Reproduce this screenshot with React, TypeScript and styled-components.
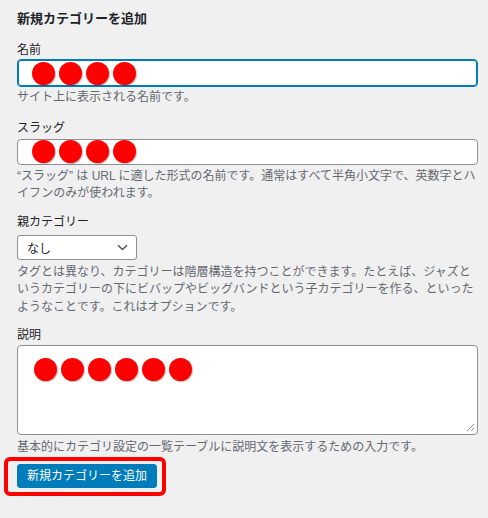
import React from 'react'
import styled, { createGlobalStyle } from 'styled-components'

const GlobalStyle = createGlobalStyle`
  body {
    margin: 0;
    background: #f0f0f1;
    font-family: "Liberation Sans", "Noto Sans CJK JP", sans-serif;
    color: #1d2327;
  }
`

const Panel = styled.div`
  padding: 10px 10px 30px 17px;
`

const Title = styled.h2`
  margin: 0;
  font-size: 13px;
  font-weight: 700;
  line-height: 18px;
`

const Field = styled.div<{ $top: number }>`
  margin-top: ${p => p.$top}px;
`

const Label = styled.label`
  display: block;
  font-size: 12px;
  line-height: 18px;
`

const TextBox = styled.div<{ $focused?: boolean; $height: number; $padTop: number; $padLeft: number; $top: number }>`
  position: relative;
  box-sizing: border-box;
  margin-top: ${p => p.$top}px;
  height: ${p => p.$height}px;
  padding: ${p => p.$padTop}px 0 0 ${p => p.$padLeft}px;
  background: #fff;
  border: 1px solid ${p => (p.$focused ? '#007cba' : '#8c8f94')};
  box-shadow: ${p => (p.$focused ? 'inset 0 0 0 1px #007cba' : 'none')};
  border-radius: 4px;
  display: flex;
  align-items: flex-start;
  gap: 4px;
`

const Dot = styled.span`
  width: 23px;
  height: 23px;
  border-radius: 50%;
  background: #ff0000;
  box-shadow: 1px 1px 1px rgba(0, 0, 0, 0.25);
  flex: none;
`

const Help = styled.p<{ $top: number }>`
  margin: ${p => p.$top}px 0 0;
  font-size: 12px;
  line-height: 17.5px;
  color: #646970;
`

const Select = styled.div`
  box-sizing: border-box;
  margin-top: 4px;
  width: 120px;
  height: 25px;
  padding: 0 8px 0 9px;
  background: #fff;
  border: 1px solid #8c8f94;
  border-radius: 3px;
  display: flex;
  align-items: center;
  justify-content: space-between;
  font-size: 12px;
`

const Grip = styled.svg`
  position: absolute;
  right: 2px;
  bottom: 2px;
`

const ButtonRow = styled.div`
  position: relative;
  margin-top: 7.5px;
  width: 140px;
`

const Highlight = styled.div`
  position: absolute;
  left: -13px;
  top: -7px;
  width: 162px;
  height: 39px;
  box-sizing: border-box;
  border: 4px solid #ff0000;
  border-radius: 6px;
  pointer-events: none;
`

const PrimaryButton = styled.button`
  display: block;
  width: 140px;
  height: 24px;
  padding: 0;
  border: 1px solid #007cba;
  border-radius: 3px;
  background: #007cba;
  color: #fff;
  font-family: inherit;
  font-size: 12px;
  line-height: 22px;
`

const Dots = ({ count }: { count: number }) => (
  <>
    {Array.from({ length: count }).map((_, i) => (
      <Dot key={i} />
    ))}
  </>
)

export default function App() {
  return (
    <Panel>
      <GlobalStyle />
      <Title>新規カテゴリーを追加</Title>

      <Field $top={13}>
        <Label>名前</Label>
        <TextBox $focused $height={28} $padTop={2} $padLeft={14} $top={0}>
          <Dots count={4} />
        </TextBox>
        <Help $top={2}>サイト上に表示される名前です。</Help>
      </Field>

      <Field $top={12}>
        <Label>スラッグ</Label>
        <TextBox $height={26} $padTop={0} $padLeft={14} $top={2}>
          <Dots count={4} />
        </TextBox>
        <Help $top={3}>
          “スラッグ” は URL に適した形式の名前です。通常はすべて半角小文字で、英数字とハ
          <br />
          イフンのみが使われます。
        </Help>
      </Field>

      <Field $top={10}>
        <Label>親カテゴリー</Label>
        <Select>
          <span>なし</span>
          <svg width="11" height="7" viewBox="0 0 11 7">
            <path d="M1 1.2l4.5 4.3L10 1.2" fill="none" stroke="#50575e" strokeWidth="1.5" />
          </svg>
        </Select>
        <Help $top={4}>
          タグとは異なり、カテゴリーは階層構造を持つことができます。たとえば、ジャズと
          <br />
          いうカテゴリーの下にビバップやビッグバンドという子カテゴリーを作る、といった
          <br />
          ようなことです。これはオプションです。
        </Help>
      </Field>

      <Field $top={10}>
        <Label>説明</Label>
        <TextBox $height={90} $padTop={12} $padLeft={16} $top={1}>
          <Dots count={6} />
          <Grip width="9" height="9" viewBox="0 0 9 9">
            <path d="M8 1L1 8M8 5L5 8" stroke="#8c8f94" strokeWidth="1" />
          </Grip>
        </TextBox>
        <Help $top={4}>基本的にカテゴリ設定の一覧テーブルに説明文を表示するための入力です。</Help>
      </Field>

      <ButtonRow>
        <PrimaryButton>新規カテゴリーを追加</PrimaryButton>
        <Highlight />
      </ButtonRow>
    </Panel>
  )
}
